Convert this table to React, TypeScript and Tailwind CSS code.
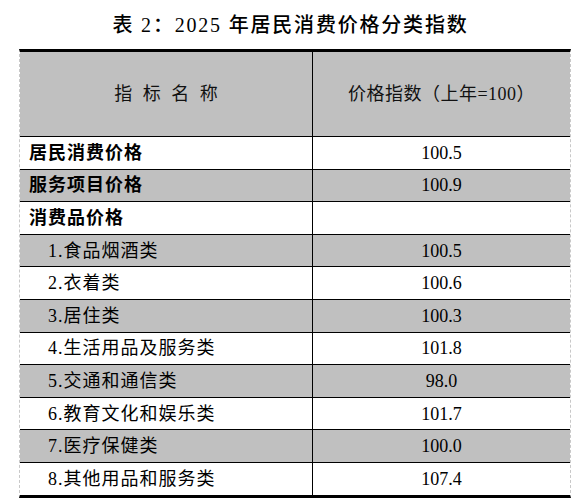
const rows: { name: string; value: string; bold?: boolean }[] = [
  { name: "居民消费价格", value: "100.5", bold: true },
  { name: "服务项目价格", value: "100.9", bold: true },
  { name: "消费品价格", value: "", bold: true },
  { name: "1.食品烟酒类", value: "100.5" },
  { name: "2.衣着类", value: "100.6" },
  { name: "3.居住类", value: "100.3" },
  { name: "4.生活用品及服务类", value: "101.8" },
  { name: "5.交通和通信类", value: "98.0" },
  { name: "6.教育文化和娱乐类", value: "101.7" },
  { name: "7.医疗保健类", value: "100.0" },
  { name: "8.其他用品和服务类", value: "107.4" },
];

export default function App() {
  return (
    <div className="w-[587px] h-[501px] bg-white text-black font-['Liberation_Serif','Noto_Sans_CJK_SC',serif]">
      <div className="h-[49px] flex items-center justify-center">
        <h1 className="text-[20px] leading-[28px] font-medium tracking-[1.8px] pr-[6px]">
          表 2：2025 年居民消费价格分类指数
        </h1>
      </div>
      <div className="ml-[19px] w-[552px] border-t-[3px] border-b-[3px] border-t-black border-b-black border-x border-x-[#c8c8c8] border-dashed [border-top-style:solid] [border-bottom-style:solid]">
        <div className="flex h-[84px] bg-[#c0c0c0] text-[18px] text-[#111]">
          <div className="w-[293px] border-r border-black flex items-center justify-center">
            <span className="tracking-[3px] pl-[3px]">指 标 名 称</span>
          </div>
          <div className="flex-1 flex items-center justify-center tracking-[0.5px]">
            价格指数（上年=100）
          </div>
        </div>
        {rows.map((r, i) => (
          <div
            key={r.name}
            className={`flex h-[32.6px] border-t border-black text-[18px] leading-none ${
              i % 2 === 1 ? "bg-[#c0c0c0]" : "bg-white"
            }`}
          >
            <div
              className={`w-[293px] border-r border-black flex items-center tracking-[1px] ${
                r.bold ? "font-bold pl-[9px]" : "pl-[28px]"
              }`}
            >
              {r.name}
            </div>
            <div className="flex-1 flex items-center justify-center">{r.value}</div>
          </div>
        ))}
      </div>
    </div>
  );
}
